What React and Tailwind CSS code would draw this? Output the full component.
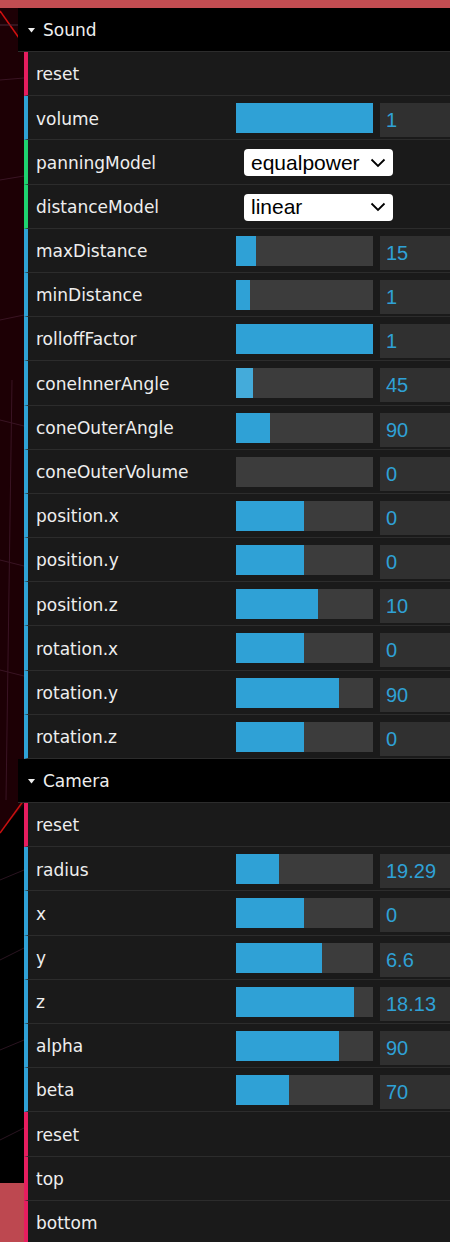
const sound = [
  { type: "fn", label: "reset" },
  { type: "num", label: "volume", fill: 137, value: "1" },
  { type: "sel", label: "panningModel", value: "equalpower" },
  { type: "sel", label: "distanceModel", value: "linear" },
  { type: "num", label: "maxDistance", fill: 20, value: "15" },
  { type: "num", label: "minDistance", fill: 14, value: "1" },
  { type: "num", label: "rolloffFactor", fill: 137, value: "1" },
  { type: "num", label: "coneInnerAngle", fill: 17, value: "45", hover: true },
  { type: "num", label: "coneOuterAngle", fill: 34, value: "90" },
  { type: "num", label: "coneOuterVolume", fill: 0, value: "0" },
  { type: "num", label: "position.x", fill: 68, value: "0" },
  { type: "num", label: "position.y", fill: 68, value: "0" },
  { type: "num", label: "position.z", fill: 82, value: "10" },
  { type: "num", label: "rotation.x", fill: 68, value: "0" },
  { type: "num", label: "rotation.y", fill: 103, value: "90" },
  { type: "num", label: "rotation.z", fill: 68, value: "0" },
];

const camera = [
  { type: "fn", label: "reset" },
  { type: "num", label: "radius", fill: 43, value: "19.29" },
  { type: "num", label: "x", fill: 68, value: "0" },
  { type: "num", label: "y", fill: 86, value: "6.6" },
  { type: "num", label: "z", fill: 118, value: "18.13" },
  { type: "num", label: "alpha", fill: 103, value: "90" },
  { type: "num", label: "beta", fill: 53, value: "70" },
  { type: "fn", label: "reset" },
  { type: "fn", label: "top" },
  { type: "fn", label: "bottom" },
];

function Backdrop() {
  // the 3d scene peeking out behind the gui
  return (
    <svg
      className="absolute inset-0"
      width="450"
      height="1242"
      viewBox="0 0 450 1242"
    >
      <rect x="0" y="0" width="450" height="1242" fill="#000" />
      <polygon points="0,8 30,8 30,798 0,832" fill="#1d0005" />
      <rect x="0" y="0" width="450" height="8" fill="#c24d52" />
      <line x1="0" y1="11" x2="19" y2="38" stroke="#d01010" strokeWidth="1.5" />
      <line x1="0" y1="25" x2="19" y2="25" stroke="#4a2a3a" strokeWidth="1" />
      <line x1="0" y1="80" x2="24" y2="78" stroke="#3a1424" strokeWidth="1" />
      <line x1="0" y1="180" x2="24" y2="176" stroke="#3a1424" strokeWidth="1" />
      <line x1="0" y1="320" x2="24" y2="315" stroke="#3a1424" strokeWidth="1" />
      <line x1="0" y1="420" x2="24" y2="426" stroke="#3a1424" strokeWidth="1" />
      <line x1="0" y1="560" x2="24" y2="566" stroke="#3a1424" strokeWidth="1" />
      <line x1="0" y1="670" x2="24" y2="676" stroke="#3a1424" strokeWidth="1" />
      <line x1="12" y1="380" x2="6" y2="800" stroke="#3a1424" strokeWidth="1" />
      <line x1="0" y1="833" x2="24" y2="800" stroke="#c81010" strokeWidth="1.5" />
      <line x1="0" y1="880" x2="24" y2="870" stroke="#2a1420" strokeWidth="1" />
      <line x1="0" y1="960" x2="24" y2="948" stroke="#2a1420" strokeWidth="1" />
      <line x1="0" y1="1050" x2="24" y2="1040" stroke="#2a1420" strokeWidth="1" />
      <line x1="0" y1="1140" x2="24" y2="1128" stroke="#2a1420" strokeWidth="1" />
      <rect x="0" y="1183" width="30" height="59" fill="#bd4850" />
    </svg>
  );
}

function Header({ title }) {
  return (
    <div className="flex items-center h-[44px] bg-black border-b border-[#2c2c2c] pl-[10px] pt-[3px] text-[17px] text-[#eeeeee]">
      <svg width="7" height="5" viewBox="0 0 7 5" className="mr-[8px] -mt-[2px]">
        <polygon points="0,0 7,0 3.5,4.5" fill="#eeeeee" />
      </svg>
      <span>{title}</span>
    </div>
  );
}

function Row({ item }) {
  const border =
    item.type === "fn"
      ? "border-[#e61d5f]"
      : item.type === "sel"
      ? "border-[#1ed36f]"
      : "border-[#2fa1d6]";

  return (
    <div
      className={`flex h-[44.2px] ml-[6px] bg-[#1a1a1a] border-l-4 ${border} border-b border-b-[#2c2c2c]`}
    >
      <div className="w-[208px] shrink-0 pl-[8px] pt-[3px] flex items-center text-[17px] text-[#eeeeee]">
        {item.label}
      </div>
      {item.type === "num" && (
        <div className="flex items-start pt-[7px] gap-[7px]">
          <div className="w-[137px] h-[30px] bg-[#3c3c3c] shrink-0">
            <div
              className={`h-full ${item.hover ? "bg-[#44abda]" : "bg-[#2fa1d6]"}`}
              style={{ width: item.fill }}
            />
          </div>
          <div className="w-[90px] h-[34px] bg-[#303030] shrink-0 pl-[6px] flex items-center text-[20px] text-[#2fa1d6] font-['Liberation_Sans',Arial,sans-serif]">
            {item.value}
          </div>
        </div>
      )}
      {item.type === "sel" && (
        <div className="flex items-start pt-[9px] pl-[8px]">
          <div className="w-[149px] h-[27px] bg-white rounded-[4px] flex items-center justify-between pl-[7px] pr-[7px] text-[21px] text-black font-['Liberation_Sans',Arial,sans-serif]">
            <span>{item.value}</span>
            <svg width="16" height="10" viewBox="0 0 16 10">
              <polyline
                points="1.5,1.5 8,8 14.5,1.5"
                fill="none"
                stroke="#000"
                strokeWidth="1.8"
              />
            </svg>
          </div>
        </div>
      )}
    </div>
  );
}

export default function App() {
  return (
    <div className="relative w-[450px] h-[1242px] overflow-hidden font-['DejaVu_Sans',sans-serif]">
      <Backdrop />
      <div className="relative mt-[8px] ml-[18px] w-[460px]">
        <Header title="Sound" />
        {sound.map((item, i) => (
          <Row key={"s" + i} item={item} />
        ))}
        <Header title="Camera" />
        {camera.map((item, i) => (
          <Row key={"c" + i} item={item} />
        ))}
      </div>
    </div>
  );
}
